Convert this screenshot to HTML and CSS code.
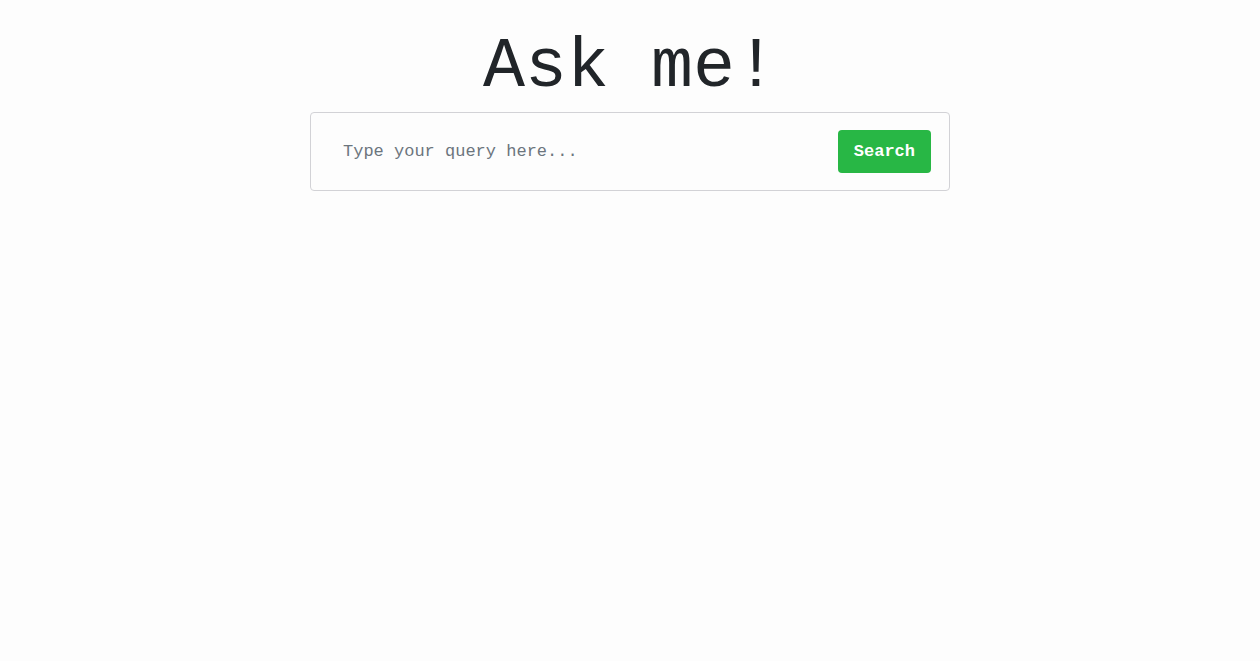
FILE: index.html
```html
<!DOCTYPE html>
<html lang="en">
<head>
<meta charset="utf-8">
<meta name="viewport" content="width=device-width, initial-scale=1">
<title>Ask me!</title>
<link rel="stylesheet" href="styles.css">
</head>
<body>
<main class="page">
  <h1 class="title">Ask me!</h1>
  <form class="search" role="search">
    <input class="search-input" type="text" aria-label="Query" placeholder="Type your query here...">
    <button class="search-button" type="button">Search</button>
  </form>
</main>
</body>
</html>
```

FILE: styles.css
```css
* {
  box-sizing: border-box;
}

body {
  margin: 0;
  background: #fdfdfd;
  color: #212529;
  font-family: "Liberation Mono", "Courier New", monospace;
}

.page {
  max-width: 640px;
  margin: 0 auto;
  padding: 28px 0;
}

.title {
  margin: 0 0 4px;
  font-size: 70px;
  font-weight: 400;
  line-height: 80px;
  text-align: center;
}

.search {
  display: flex;
  align-items: center;
  padding: 17px 18px;
  border: 1px solid #d2d2d6;
  border-radius: 4px;
}

.search-input {
  flex: 1;
  min-width: 0;
  padding: 8px 14px;
  border: 0;
  outline: 0;
  background: transparent;
  color: #212529;
  font: inherit;
  font-size: 17px;
}

.search-input::placeholder {
  color: #6c757d;
  opacity: 1;
}

.search-button {
  padding: 0 16px;
  border: 0;
  border-radius: 4px;
  background: #28b745;
  color: #fff;
  font: inherit;
  font-size: 17px;
  font-weight: 700;
  line-height: 43px;
}
```
